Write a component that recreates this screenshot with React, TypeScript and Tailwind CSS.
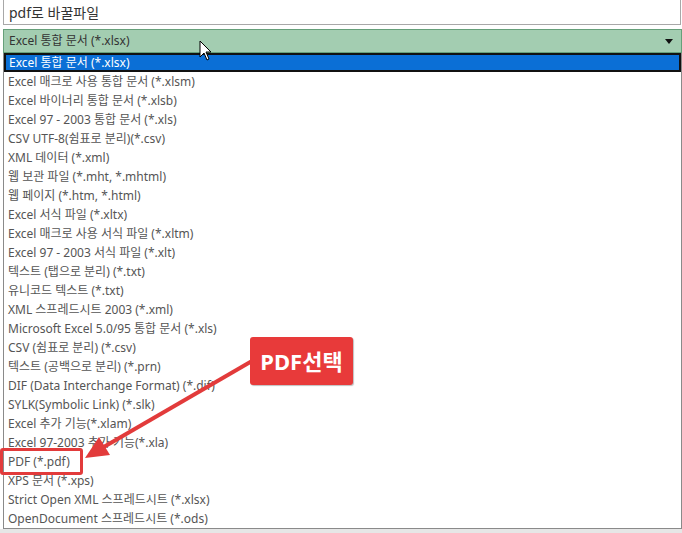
import React from "react";

const items = [
  "Excel 매크로 사용 통합 문서 (*.xlsm)",
  "Excel 바이너리 통합 문서 (*.xlsb)",
  "Excel 97 - 2003 통합 문서 (*.xls)",
  "CSV UTF-8(쉼표로 분리)(*.csv)",
  "XML 데이터 (*.xml)",
  "웹 보관 파일 (*.mht, *.mhtml)",
  "웹 페이지 (*.htm, *.html)",
  "Excel 서식 파일 (*.xltx)",
  "Excel 매크로 사용 서식 파일 (*.xltm)",
  "Excel 97 - 2003 서식 파일 (*.xlt)",
  "텍스트 (탭으로 분리) (*.txt)",
  "유니코드 텍스트 (*.txt)",
  "XML 스프레드시트 2003 (*.xml)",
  "Microsoft Excel 5.0/95 통합 문서 (*.xls)",
  "CSV (쉼표로 분리) (*.csv)",
  "텍스트 (공백으로 분리) (*.prn)",
  "DIF (Data Interchange Format) (*.dif)",
  "SYLK(Symbolic Link) (*.slk)",
  "Excel 추가 기능(*.xlam)",
  "Excel 97-2003 추가 기능(*.xla)",
  "PDF (*.pdf)",
  "XPS 문서 (*.xps)",
  "Strict Open XML 스프레드시트 (*.xlsx)",
  "OpenDocument 스프레드시트 (*.ods)",
];

const font = { fontFamily: "'Noto Sans', 'Noto Sans CJK KR', sans-serif" };

export default function App() {
  return (
    <div
      className="relative w-[682px] h-[533px] bg-white overflow-hidden text-[12px] text-[#555]"
      style={font}
    >
      <div className="ml-[3px] w-[678px] h-[25px] border border-t-0 border-[#a8a8a8] flex items-center pl-[5px] text-[14px] text-[#333]">
        pdf로 바꿀파일
      </div>
      <div className="ml-[3px] mt-[4px] w-[679px] h-[24px] bg-[#a3cdb1] border border-[#66a07a] flex items-center justify-between pl-[5px] pr-[8px] text-[#333]">
        <span>Excel 통합 문서 (*.xlsx)</span>
        <svg width="8" height="5" viewBox="0 0 8 5">
          <path d="M0 0 L8 0 L4 5 Z" fill="#111" />
        </svg>
      </div>
      <div className="ml-[3px] w-[679px] border-l border-r border-b border-[#8a8a8a]">
        <div className="h-[19px] bg-[#0b6fd6] border-2 border-[#111] flex items-center pl-[3px] text-white">
          Excel 통합 문서 (*.xlsx)
        </div>
        {items.map((t) => (
          <div key={t} className="h-[19px] flex items-center pl-[4px] whitespace-nowrap">
            {t}
          </div>
        ))}
      </div>
      <div className="h-[5px] bg-[#e6e6e6]" />

      {/* highlight box */}
      <div className="absolute left-[0px] top-[448px] w-[83px] h-[27px] border-[3px] border-[#e23b3b] rounded-[3px]" />

      {/* arrow */}
      <svg className="absolute left-0 top-0" width="682" height="533">
        <line x1="252" y1="361" x2="102" y2="448" stroke="#e23b3b" strokeWidth="4" />
        <path d="M85 458 L99 437 L110 455 Z" fill="#e23b3b" />
      </svg>

      {/* label */}
      <div className="absolute left-[250px] top-[337px] w-[103px] h-[48px] bg-[#e83a3a] rounded-[3px] flex items-center justify-center text-white font-bold text-[22px] shadow-[1px_1px_1px_rgba(0,0,0,0.25)]">
        PDF선택
      </div>

      {/* cursor */}
      <svg className="absolute left-[199px] top-[40px]" width="14" height="22" viewBox="0 0 14 22">
        <path d="M1 1 L1 17 L5 13 L8 20 L10 19 L7 12 L12 12 Z" fill="#fff" stroke="#000" strokeWidth="1" />
      </svg>
    </div>
  );
}
